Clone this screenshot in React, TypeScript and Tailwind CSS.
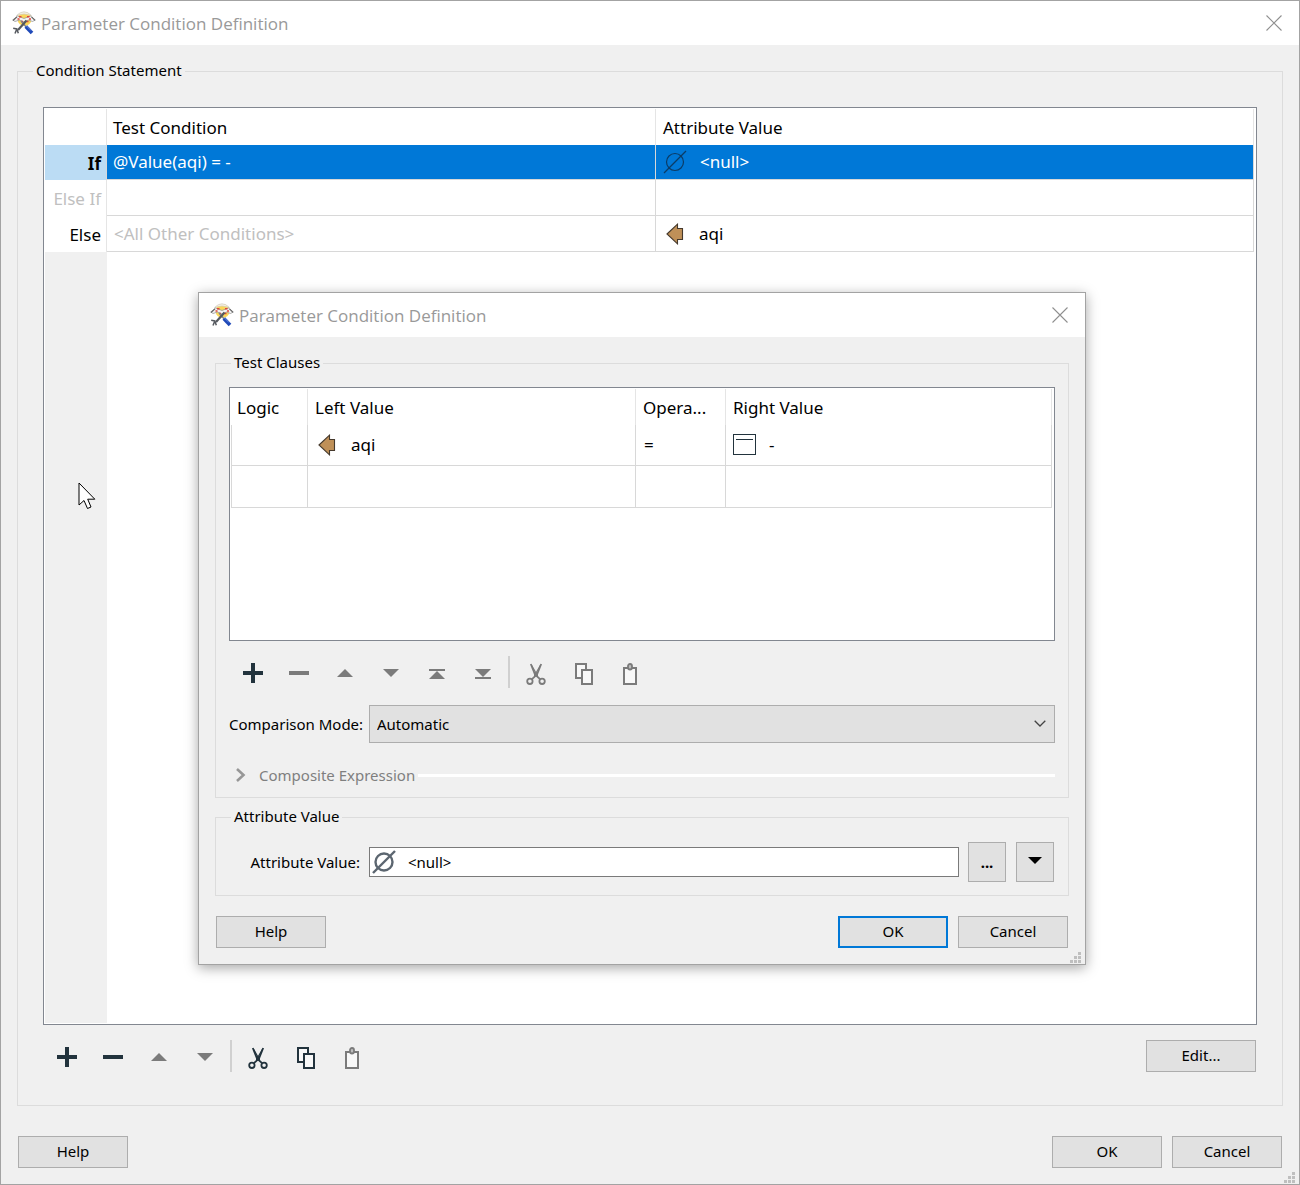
import type { ReactNode } from 'react'

const DARK = '#22333d'
const MUTED = '#7b7b7b'

function AppIcon() {
  return (
    <svg width="24" height="24" viewBox="0 0 24 24" aria-hidden="true">
      <circle cx="12.5" cy="8" r="7" fill="#fbd75a" />
      <path d="M4.5 4.5 Q12 -3 19.5 4.5 Q12 1.5 4.5 4.5Z" fill="#f4efdf" stroke="#c9c6bd" strokeWidth=".6" />
      <path d="M.7 9 L5.5 5 L12 7.5 L18.5 5 L23.3 9 L20.5 10.5 L16.5 9 L12 11 L7.5 9 L3 10.5Z" fill="#f3f3f3" stroke="#8c8c8c" strokeWidth=".7" />
      <path d="M1 9.5 L5 5.8 M19.5 5.8 L23 9.3" stroke="#666" strokeWidth="1.1" />
      <path d="M7 5.8h2.5M15 5.8h2.5M5.5 8h2M17 8h2M9 10.5h2M14.5 10.5h2" stroke="#e0443b" strokeWidth="1.4" />
      <path d="M9 10 L15 17" stroke="#7c8591" strokeWidth="1.4" />
      <path d="M14.5 9.5 L6 19" stroke="#55595f" strokeWidth="2.2" />
      <path d="M1.2 17.3 L4.8 18 L6.3 22.3 M4.8 18 L3 22.5" stroke="#55595f" strokeWidth="1.5" fill="none" />
      <path d="M13.8 15.5 L20 22" stroke="#1f49b8" strokeWidth="3.6" />
      <path d="M14.5 15 L19 19.5" stroke="#6b8fe8" strokeWidth=".9" />
    </svg>
  )
}

function CloseIcon() {
  return (
    <svg width="16" height="16" viewBox="0 0 16 16" aria-hidden="true">
      <path d="M.5 .5 L15.5 15.5 M15.5 .5 L.5 15.5" stroke="#8f8f8f" strokeWidth="1.1" />
    </svg>
  )
}

function NullIcon({ color, weight }: { color: string; weight: number }) {
  return (
    <svg width="24" height="24" viewBox="0 0 24 24" className="shrink-0" aria-hidden="true">
      <circle cx="12" cy="12" r="8.5" fill="none" stroke={color} strokeWidth={weight} />
      <path d="M1 23 L23 1" stroke={color} strokeWidth={weight} />
    </svg>
  )
}

function AttributeArrow() {
  return (
    <svg width="18" height="22" viewBox="0 0 18 22" className="shrink-0" aria-hidden="true">
      <path d="M1 11 L11.5 1.2 V5.5 H16.5 V16.5 H11.5 V20.8 Z" fill="#bf9058" stroke="#45392c" strokeWidth="1.1" />
    </svg>
  )
}

function ConstantIcon() {
  return (
    <svg width="24" height="22" viewBox="0 0 24 22" className="shrink-0" aria-hidden="true">
      <rect x=".5" y=".5" width="22" height="20" fill="#fff" stroke={DARK} />
      <path d="M3 5.5 H20" stroke={DARK} />
    </svg>
  )
}

const GLYPHS: Record<string, (c: string) => ReactNode> = {
  Add: (c) => <path d="M21 7h4v8h8v4h-8v8h-4v-8h-8v-4h8z" fill={c} />,
  Remove: (c) => <path d="M13 15h20v4h-20z" fill={c} />,
  'Move up': (c) => <path d="M15 21 L23 13 L31 21z" fill={c} />,
  'Move down': (c) => <path d="M15 13 L23 21 L31 13z" fill={c} />,
  'Move to top': (c) => <path d="M15 13h16v2h-16z M15 23 L23 15 L31 23z" fill={c} />,
  'Move to bottom': (c) => <path d="M15 13 L23 21 L31 13z M15 21h16v2h-16z" fill={c} />,
  Cut: (c) => (
    <g fill="none" stroke={c} strokeWidth="1.8">
      <path d="M17.8 8 L22 18.5 L27 23.2 M28.2 8 L24 18.5 L19 23.2" />
      <path d="M18.4 9 L23 17 L27.6 9" strokeWidth="1.2" />
      <path d="M21 16.5h4v4h-4z" fill={c} stroke="none" />
      <circle cx="16.9" cy="25.3" r="2.7" />
      <circle cx="29.1" cy="25.3" r="2.7" />
    </g>
  ),
  Copy: (c) => (
    <g fill="#f8f8f8" stroke={c} strokeWidth="2">
      <rect x="17" y="8" width="10" height="14" />
      <rect x="23" y="14" width="10" height="14" />
    </g>
  ),
  Paste: (c) => (
    <g fill="#f8f8f8" stroke={c} strokeWidth="2">
      <rect x="19" y="12" width="12" height="16" />
      <rect x="23" y="8" width="4" height="5.5" rx="2" fill="#bdbdbd" strokeWidth="1.8" />
    </g>
  ),
}

function ToolButton({ name, enabled }: { name: string; enabled?: boolean }) {
  return (
    <button type="button" aria-label={name} disabled={!enabled} className="h-8 w-[46px]">
      <svg width="46" height="32" viewBox="0 0 46 32" aria-hidden="true">
        {GLYPHS[name](enabled ? DARK : MUTED)}
      </svg>
    </button>
  )
}

function ToolSeparator() {
  return (
    <div className="flex w-[7px] pl-0.5">
      <div className="h-8 w-0.5 bg-[#d0d0d0]" />
    </div>
  )
}

function PushButton({ children, primary }: { children: ReactNode; primary?: boolean }) {
  return (
    <button
      type="button"
      className={
        primary
          ? 'h-8 w-[110px] border-2 border-[#0078d7] bg-[#e1e1e1] pb-0.5'
          : 'h-8 w-[110px] border border-[#adadad] bg-[#e1e1e1] pb-0.5'
      }
    >
      {children}
    </button>
  )
}

function TitleBar() {
  return (
    <header className="flex h-11 items-center justify-between bg-white pr-[17px] pl-[11px]">
      <div className="flex items-center gap-[5px]">
        <AppIcon />
        <h1 className="pt-px font-['Open_Sans','Noto_Sans',sans-serif] text-[17px] text-[#999999]">
          Parameter Condition Definition
        </h1>
      </div>
      <button type="button" aria-label="Close">
        <CloseIcon />
      </button>
    </header>
  )
}

function SizeGrip() {
  return (
    <svg width="11" height="11" viewBox="0 0 11 11" className="absolute right-1 bottom-px" aria-hidden="true">
      <path d="M8 0h3v3h-3z M4 4h3v3h-3z M8 4h3v3h-3z M0 8h3v3h-3z M4 8h3v3h-3z M8 8h3v3h-3z" fill="#bfbfbf" />
    </svg>
  )
}

function Legend({ children }: { children: ReactNode }) {
  return <legend className="ml-[15px] h-6 px-[3px] leading-[22px]">{children}</legend>
}

function ConditionTable() {
  return (
    <table className="w-full table-fixed border-separate border-spacing-0 bg-white text-[17px]">
      <colgroup>
        <col className="w-[62px]" />
        <col className="w-[549px]" />
        <col />
      </colgroup>
      <thead>
        <tr className="h-9 text-left">
          <td className="border-r border-[#e5e5e5]" />
          <th className="border-r border-[#e5e5e5] px-1.5 pt-0.5 font-normal">Test Condition</th>
          <th className="border-r border-[#e5e5e5] px-[7px] pt-0.5 font-normal">Attribute Value</th>
        </tr>
      </thead>
      <tbody>
        <tr className="h-[35px] bg-[#0078d7] text-white">
          <th className="border-r border-[#d8d8d8] bg-[#bbdcf4] pt-0.5 pr-[5px] text-right font-bold text-black">If</th>
          <td className="border-r border-b border-[#d8d8d8] px-1.5">@Value(aqi) = -</td>
          <td className="border-r border-b border-[#d8d8d8] px-[7px]">
            <div className="flex items-center gap-[13px]">
              <NullIcon color="#0b3c66" weight={1.2} />
              &lt;null&gt;
            </div>
          </td>
        </tr>
        <tr className="h-9">
          <th className="border-r border-[#e5e5e5] pt-0.5 pr-[5px] text-right font-normal text-[#c0c0c0]">Else If</th>
          <td className="border-r border-b border-[#d8d8d8]" />
          <td className="border-r border-b border-[#d8d8d8]" />
        </tr>
        <tr className="h-9">
          <th className="border-r border-[#e5e5e5] pt-0.5 pr-[5px] text-right font-normal">Else</th>
          <td className="border-r border-b border-[#d8d8d8] px-[7px] text-[#c0c0c0]">&lt;All Other Conditions&gt;</td>
          <td className="border-r border-b border-[#d8d8d8] px-2.5">
            <div className="flex items-center gap-[15px]">
              <AttributeArrow />
              aqi
            </div>
          </td>
        </tr>
      </tbody>
    </table>
  )
}

function ClauseTable() {
  return (
    <table className="w-full table-fixed border-separate border-spacing-0 text-[17px]">
      <colgroup>
        <col className="w-[77px]" />
        <col className="w-[328px]" />
        <col className="w-[90px]" />
        <col />
      </colgroup>
      <thead>
        <tr className="h-9 text-left">
          <th className="border-r border-[#e5e5e5] px-1.5 pt-0.5 font-normal">Logic</th>
          <th className="border-r border-[#e5e5e5] px-[7px] pt-0.5 font-normal">Left Value</th>
          <th className="truncate border-r border-[#e5e5e5] px-[7px] pt-0.5 font-normal">Opera...</th>
          <th className="border-r border-[#e5e5e5] px-[7px] pt-0.5 font-normal">Right Value</th>
        </tr>
      </thead>
      <tbody>
        <tr className="h-[41px]">
          <td className="border-r border-b border-l border-[#d8d8d8]" />
          <td className="border-r border-b border-[#d8d8d8] px-2.5">
            <div className="flex items-center gap-[15px]">
              <AttributeArrow />
              aqi
            </div>
          </td>
          <td className="border-r border-b border-[#d8d8d8] px-2">=</td>
          <td className="border-r border-b border-[#d8d8d8] px-[7px]">
            <div className="flex items-center gap-3">
              <ConstantIcon />-
            </div>
          </td>
        </tr>
        <tr className="h-[42px]">
          <td className="border-r border-b border-l border-[#d8d8d8]" />
          <td className="border-r border-b border-[#d8d8d8]" />
          <td className="border-r border-b border-[#d8d8d8]" />
          <td className="border-r border-b border-[#d8d8d8]" />
        </tr>
      </tbody>
    </table>
  )
}

function ClauseDialog() {
  return (
    <section
      role="dialog"
      aria-label="Parameter Condition Definition"
      className="absolute top-[291px] right-[213px] left-[197px] border border-[#a3a3a3] bg-[#f0f0f0] shadow-[0_3px_12px_rgba(0,0,0,0.35)]"
    >
      <TitleBar />
      <div className="px-4 pt-[14px] pb-4">
        <fieldset className="border border-[#dcdcdc]">
          <Legend>Test Clauses</Legend>
          <div className="px-[13px] pt-3">
            <div className="h-[254px] border border-[#828790] bg-white py-px pr-0.5 pl-px">
              <ClauseTable />
            </div>
            <div className="mt-[15px] flex pl-px">
              <ToolButton name="Add" enabled />
              <ToolButton name="Remove" />
              <ToolButton name="Move up" />
              <ToolButton name="Move down" />
              <ToolButton name="Move to top" />
              <ToolButton name="Move to bottom" />
              <ToolSeparator />
              <ToolButton name="Cut" />
              <ToolButton name="Copy" />
              <ToolButton name="Paste" />
            </div>
            <div className="mt-[17px] flex items-center">
              <label htmlFor="mode" className="w-[140px] whitespace-nowrap">
                Comparison Mode:
              </label>
              <div className="relative flex-1">
                <select id="mode" className="h-[38px] w-full appearance-none border border-[#adadad] bg-[#e1e1e1] px-[7px]">
                  <option>Automatic</option>
                </select>
                <svg width="12" height="8" viewBox="0 0 12 8" className="pointer-events-none absolute top-[15px] right-[9px]" aria-hidden="true">
                  <path d="M.7 .8 L6 6 L11.3 .8" fill="none" stroke="#444" strokeWidth="1.3" />
                </svg>
              </div>
            </div>
            <button type="button" disabled className="mt-5 mb-[10px] flex h-6 w-full items-center text-[#7f7f7f]">
              <svg width="12" height="14" viewBox="0 0 12 14" className="mr-3 ml-1.5" aria-hidden="true">
                <path d="M2 1 L8.5 7 L2 13" fill="none" stroke="#979797" strokeWidth="2.6" />
              </svg>
              Composite Expression
              <span className="ml-[3px] h-[3px] flex-1 bg-white" />
            </button>
          </div>
        </fieldset>
        <fieldset className="mt-[7px] border border-[#dcdcdc]">
          <Legend>Attribute Value</Legend>
          <div className="flex items-center px-[13px] py-[13px]">
            <label htmlFor="attribute-value" className="w-[140px] pr-[9px] text-right whitespace-nowrap">
              Attribute Value:
            </label>
            <div className="flex h-[30px] flex-1 items-center gap-3 border border-[#7a7a7a] bg-white pl-0.5">
              <NullIcon color="#5c6670" weight={2.4} />
              <input id="attribute-value" defaultValue="<null>" className="min-w-0 flex-1 outline-none" />
            </div>
            <button type="button" className="ml-[9px] h-10 w-[38px] border border-[#adadad] bg-[#e1e1e1] font-bold">
              ...
            </button>
            <button
              type="button"
              aria-label="Attribute value options"
              className="mr-px ml-[10px] flex h-10 w-[38px] items-center justify-center border border-[#adadad] bg-[#e1e1e1] pb-1"
            >
              <svg width="14" height="7" viewBox="0 0 14 7" aria-hidden="true">
                <path d="M0 0 H14 L7 7z" fill="#000" />
              </svg>
            </button>
          </div>
        </fieldset>
        <footer className="mt-5 flex gap-[10px] px-px">
          <div className="flex-1">
            <PushButton>Help</PushButton>
          </div>
          <PushButton primary>OK</PushButton>
          <PushButton>Cancel</PushButton>
        </footer>
      </div>
      <SizeGrip />
    </section>
  )
}

export default function App() {
  return (
    <main className="relative flex h-screen flex-col border border-[#a3a3a3] bg-[#f0f0f0] font-['Noto_Sans','Open_Sans',sans-serif] text-[15px] text-black">
      <TitleBar />
      <div className="flex flex-1 flex-col px-4 pt-[14px] pb-4">
        <fieldset className="flex flex-1 flex-col border border-[#dcdcdc]">
          <Legend>Condition Statement</Legend>
          <div className="flex h-full flex-1 flex-col px-[25px] pt-6 pb-[33px]">
            <div className="flex flex-1 flex-col border border-[#828790] bg-white py-px pr-0.5 pl-px">
              <ConditionTable />
              <div className="w-[62px] flex-1 bg-[#f0f0f0]" />
            </div>
            <div className="mt-[15px] flex items-center justify-between pr-px pl-px">
              <div className="flex">
                <ToolButton name="Add" enabled />
                <ToolButton name="Remove" enabled />
                <ToolButton name="Move up" />
                <ToolButton name="Move down" />
                <ToolSeparator />
                <ToolButton name="Cut" enabled />
                <ToolButton name="Copy" enabled />
                <ToolButton name="Paste" />
              </div>
              <PushButton>Edit...</PushButton>
            </div>
          </div>
        </fieldset>
        <footer className="mt-[30px] flex gap-[10px] px-px">
          <div className="flex-1">
            <PushButton>Help</PushButton>
          </div>
          <PushButton>OK</PushButton>
          <PushButton>Cancel</PushButton>
        </footer>
      </div>
      <SizeGrip />
      <ClauseDialog />
      {/* Mouse pointer */}
      <svg width="18" height="28" viewBox="0 0 18 28" className="pointer-events-none absolute top-[481px] left-[77px]" aria-hidden="true">
        <path d="M1 1 V23 L6 18.5 L9.5 26.5 L13 25 L9.7 17.2 H16.8 Z" fill="#fff" stroke="#000" strokeWidth="1" />
      </svg>
    </main>
  )
}
